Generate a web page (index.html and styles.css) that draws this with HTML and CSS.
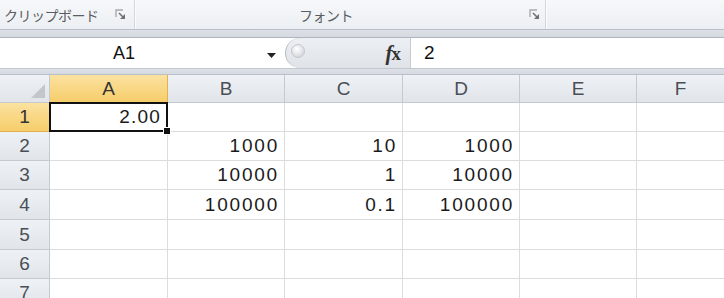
FILE: index.html
```html
<!DOCTYPE html>
<html lang="ja">
	<head>
		<meta charset="UTF-8" />
		<title>Excel</title>
		<link rel="stylesheet" href="styles.css">
	</head>
	<body>
		<div class="ribbon">
			<div class="group group-clip">
				<span class="group-label">クリップボード</span>
				<svg class="launcher" width="11" height="11" viewBox="0 0 11 11">
					<path d="M1 8V1h7" fill="none" stroke="#a7abb0" stroke-width="1.4" />
					<path d="M4 4l4 4" stroke="#6d7176" stroke-width="1.6" />
					<path d="M10 5v5H5z" fill="#6d7176" />
				</svg>
			</div>
			<div class="group group-font">
				<span class="group-label">フォント</span>
				<svg class="launcher" width="11" height="11" viewBox="0 0 11 11">
					<path d="M1 8V1h7" fill="none" stroke="#a7abb0" stroke-width="1.4" />
					<path d="M4 4l4 4" stroke="#6d7176" stroke-width="1.6" />
					<path d="M10 5v5H5z" fill="#6d7176" />
				</svg>
			</div>
			<div class="group group-rest"></div>
		</div>

		<div class="band"></div>

		<div class="formula-bar">
			<div class="namebox">
				<span class="namebox-text">A1</span>
				<svg class="dropdown" width="9" height="5" viewBox="0 0 9 5"><path d="M0 0h9L4.5 5z" fill="#222" /></svg>
			</div>
			<div class="splitter">
				<span class="knob"></span>
				<span class="fx"><i>f</i>x</span>
			</div>
			<div class="formula-input">2</div>
		</div>

		<div class="band band-low"></div>

		<div class="sheet">
			<div class="hdr corner"><svg width="14" height="14" viewBox="0 0 14 14"><path d="M14 0v14H0z" fill="#c3c7cc" /></svg></div>
			<div class="hdr col active">A</div>
			<div class="hdr col">B</div>
			<div class="hdr col">C</div>
			<div class="hdr col">D</div>
			<div class="hdr col">E</div>
			<div class="hdr col last">F</div>

			<div class="hdr row active">1</div>
			<div class="cell selected">2.00<span class="sel-box"><span class="fill-handle"></span></span></div>
			<div class="cell"></div><div class="cell"></div><div class="cell"></div><div class="cell"></div><div class="cell last"></div>

			<div class="hdr row">2</div>
			<div class="cell"></div><div class="cell">1000</div><div class="cell">10</div><div class="cell">1000</div><div class="cell"></div><div class="cell last"></div>

			<div class="hdr row">3</div>
			<div class="cell"></div><div class="cell">10000</div><div class="cell">1</div><div class="cell">10000</div><div class="cell"></div><div class="cell last"></div>

			<div class="hdr row">4</div>
			<div class="cell"></div><div class="cell">100000</div><div class="cell">0.1</div><div class="cell">100000</div><div class="cell"></div><div class="cell last"></div>

			<div class="hdr row">5</div>
			<div class="cell"></div><div class="cell"></div><div class="cell"></div><div class="cell"></div><div class="cell"></div><div class="cell last"></div>

			<div class="hdr row">6</div>
			<div class="cell"></div><div class="cell"></div><div class="cell"></div><div class="cell"></div><div class="cell"></div><div class="cell last"></div>

			<div class="hdr row">7</div>
			<div class="cell"></div><div class="cell"></div><div class="cell"></div><div class="cell"></div><div class="cell"></div><div class="cell last"></div>
		</div>
	</body>
</html>
```
FILE: styles.css
```css
body {
	margin: 0;
	width: 724px;
	height: 298px;
	overflow: hidden;
	background: #fff;
	font-family: "Liberation Sans", Arial, sans-serif;
}
.ribbon {
	display: flex;
	height: 29px;
	background: linear-gradient(#f6f8fa, #eceff3);
	border-bottom: 1px solid #b9bfc8;
}
.group {
	display: flex;
	align-items: center;
	border-right: 1px solid #d3d7dc;
	box-shadow: 1px 0 0 #fbfcfd;
}
.group-clip {
	width: 135px;
	padding-left: 4px;
	box-sizing: border-box;
}
.group-font {
	width: 411px;
	padding-left: 164px;
	box-sizing: border-box;
}
.group-rest {
	flex: 1;
	border-right: none;
	box-shadow: none;
}
.group-label {
	font-family: "Noto Sans CJK JP", sans-serif;
	font-size: 14px;
	color: #5a5d61;
	letter-spacing: -0.5px;
}
.group-clip .launcher {
	margin-left: 16px;
}
.group-font .launcher {
	margin-left: 176px;
}
.band {
	height: 7px;
	background: linear-gradient(#dde1e7, #d5dae0);
	border-bottom: 1px solid #aeb5be;
}
.band-low {
	height: 5px;
	border-top: 1px solid #c2c8cf;
	border-bottom: 1px solid #b9bfc7;
}
.formula-bar {
	display: flex;
	height: 30px;
	background: #fff;
}
.namebox {
	width: 285px;
	display: flex;
	align-items: center;
}
.namebox-text {
	font-size: 18px;
	color: #111;
	margin-left: 113px;
}
.dropdown {
	margin-left: 132px;
	margin-top: 4px;
}
.splitter {
	width: 124px;
	display: flex;
	align-items: center;
	justify-content: flex-end;
	background: linear-gradient(#eceff3, #dfe3e8);
	border-radius: 15px 0 0 15px;
	border-left: 1px solid #b4bac2;
	border-right: 1px solid #c6cbd1;
	position: relative;
}
.knob {
	position: absolute;
	left: 5px;
	top: 6px;
	width: 12px;
	height: 12px;
	border-radius: 50%;
	background: radial-gradient(circle at 40% 35%, #ffffff, #d7dbe0 70%);
	border: 1px solid #c3c8ce;
}
.fx {
	font-family: "Liberation Serif", serif;
	font-weight: bold;
	font-size: 19px;
	color: #333;
	margin-right: 10px;
	letter-spacing: -1px;
}
.fx i {
	font-size: 21px;
}
.formula-input {
	flex: 1;
	font-size: 19px;
	color: #111;
	padding-left: 13px;
	line-height: 30px;
}
.sheet {
	display: grid;
	grid-template-columns: 50px 118px 117px 118px 117px 117px 1fr;
	grid-template-rows: 28px 29px 29px 29px 30px 30px 29px 29px;
}
.hdr {
	display: flex;
	align-items: center;
	justify-content: center;
	background: linear-gradient(#eef1f5, #e1e5ea);
	border-right: 1px solid #c5cad0;
	border-bottom: 1px solid #c5cad0;
	font-size: 19px;
	color: #4a4f55;
}
.hdr.active {
	background: linear-gradient(#fbe2a0, #f6cd6a);
	color: #333;
	border-color: #e2b24f;
}
.hdr.last {
	border-right: none;
}
.corner {
	justify-content: flex-end;
	align-items: flex-end;
	padding: 0 4px 4px 0;
}
.cell {
	display: flex;
	align-items: center;
	justify-content: flex-end;
	padding-right: 5px;
	border-right: 1px solid #dadcde;
	border-bottom: 1px solid #dadcde;
	font-size: 19px;
	letter-spacing: 1.8px;
	color: #1a1a1a;
}
.cell.last {
	border-right: none;
}
.selected {
	position: relative;
	padding-right: 6px;
	letter-spacing: 1.2px;
}
.sel-box {
	position: absolute;
	left: -1px;
	top: -1px;
	right: -1px;
	bottom: -1px;
	border: 2px solid #111;
}
.fill-handle {
	position: absolute;
	right: -5px;
	bottom: -5px;
	width: 6px;
	height: 6px;
	background: #111;
	border: 1px solid #fff;
}
```
